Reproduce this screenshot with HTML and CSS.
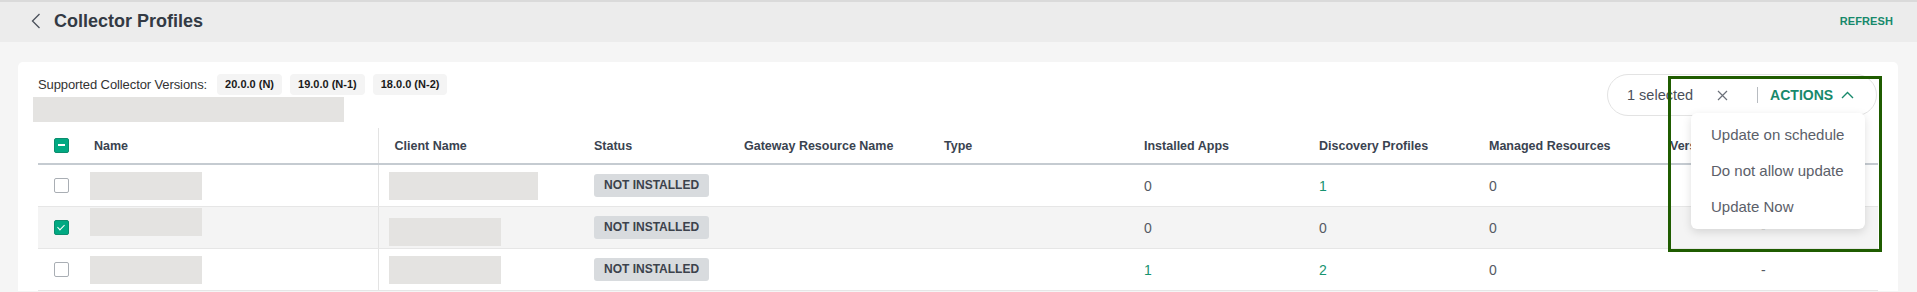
FILE: index.html
```html
<!DOCTYPE html>
<html lang="en">

<head>
    <meta charset="UTF-8">
    <meta name="viewport" content="width=device-width, initial-scale=1.0">
    <title>Collector Profiles</title>
    <link rel="stylesheet" href="styles.css">
</head>

<body>

    <header class="topbar">
        <div class="topbar-title">
            <svg class="back" width="10" height="16" viewBox="0 0 10 16">
                <path d="M8.5 1 L1.5 8 L8.5 15" fill="none" stroke="#4a505a" stroke-width="1.3" />
            </svg>
            <h1>Collector Profiles</h1>
        </div>
        <a class="refresh" href="#">REFRESH</a>
    </header>

    <main class="page">
        <section class="card">

            <div class="toolbar">
                <div class="toolbar-left">
                    <div class="versions">
                        <span class="versions-label">Supported Collector Versions:</span>
                        <span class="pill">20.0.0 (N)</span>
                        <span class="pill">19.0.0 (N-1)</span>
                        <span class="pill">18.0.0 (N-2)</span>
                    </div>
                    <div class="skeleton skeleton-wide"></div>
                </div>

                <div class="selection">
                    <span class="selection-count">1 selected</span>
                    <svg class="clear" width="11" height="11" viewBox="0 0 11 11">
                        <path d="M1 1 L10 10 M10 1 L1 10" stroke="#6b7079" stroke-width="1.2" />
                    </svg>
                    <span class="divider"></span>
                    <span class="actions">ACTIONS</span>
                    <svg class="caret" width="13" height="8" viewBox="0 0 13 8">
                        <path d="M1 7 L6.5 1.5 L12 7" fill="none" stroke="#17896b" stroke-width="1.4" />
                    </svg>

                    <ul class="menu">
                        <li>Update on schedule</li>
                        <li>Do not allow update</li>
                        <li>Update Now</li>
                    </ul>

                    <div class="highlight"></div>
                </div>
            </div>

            <table class="tabela">
                <colgroup>
                    <col style="width: 43px">
                    <col style="width: 297px">
                    <col style="width: 203px">
                    <col style="width: 150px">
                    <col style="width: 200px">
                    <col style="width: 200px">
                    <col style="width: 175px">
                    <col style="width: 170px">
                    <col style="width: 181px">
                    <col style="width: 221px">
                </colgroup>
                <thead>
                    <tr>
                        <th class="cb-cell"><span class="checkbox partial"></span></th>
                        <th class="col-name">Name</th>
                        <th class="col-client">Client Name</th>
                        <th>Status</th>
                        <th>Gateway Resource Name</th>
                        <th>Type</th>
                        <th>Installed Apps</th>
                        <th>Discovery Profiles</th>
                        <th>Managed Resources</th>
                        <th>Version</th>
                    </tr>
                </thead>
                <tbody>
                    <tr>
                        <td class="cb-cell"><span class="checkbox"></span></td>
                        <td class="col-name"><div class="skeleton skeleton-name"></div></td>
                        <td class="col-client"><div class="skeleton skeleton-client-long"></div></td>
                        <td><span class="badge">NOT INSTALLED</span></td>
                        <td></td>
                        <td></td>
                        <td>0</td>
                        <td class="link">1</td>
                        <td>0</td>
                        <td class="version">-</td>
                    </tr>
                    <tr class="selected">
                        <td class="cb-cell"><span class="checkbox checked"></span></td>
                        <td class="col-name"><div class="skeleton skeleton-name up"></div></td>
                        <td class="col-client"><div class="skeleton skeleton-client down"></div></td>
                        <td><span class="badge">NOT INSTALLED</span></td>
                        <td></td>
                        <td></td>
                        <td>0</td>
                        <td>0</td>
                        <td>0</td>
                        <td class="version">-</td>
                    </tr>
                    <tr>
                        <td class="cb-cell"><span class="checkbox"></span></td>
                        <td class="col-name"><div class="skeleton skeleton-name"></div></td>
                        <td class="col-client"><div class="skeleton skeleton-client"></div></td>
                        <td><span class="badge">NOT INSTALLED</span></td>
                        <td></td>
                        <td></td>
                        <td class="link">1</td>
                        <td class="link">2</td>
                        <td>0</td>
                        <td class="version">-</td>
                    </tr>
                </tbody>
            </table>

        </section>
    </main>

</body>

</html>
```

FILE: styles.css
```css
body {
    font-family: "Liberation Sans", Arial, sans-serif;
    margin: 0;
    padding: 0;
    background-color: #f5f5f5;
    color: #555a63;
}

.topbar {
    display: flex;
    align-items: center;
    justify-content: space-between;
    height: 42px;
    padding: 0 24px 0 31px;
    background-color: #ececec;
    box-shadow: inset 0 2px 0 #dadada;
}

.topbar-title {
    display: flex;
    align-items: center;
}

.back {
    margin-right: 13px;
}

.topbar h1 {
    margin: 0;
    font-size: 18px;
    font-weight: bold;
    color: #333a44;
}

.refresh {
    font-size: 11px;
    font-weight: bold;
    color: #17896b;
    text-decoration: none;
    letter-spacing: 0.1px;
}

.page {
    padding: 20px 19px 0 18px;
}

.card {
    background-color: #fff;
    border-radius: 5px 5px 0 0;
    padding: 12px 20px 0 15px;
}

.toolbar {
    display: flex;
    justify-content: space-between;
    align-items: flex-start;
}

.versions {
    display: flex;
    align-items: center;
    height: 21px;
    padding-left: 5px;
}

.versions-label {
    font-size: 13px;
    color: #333;
    letter-spacing: -0.1px;
    margin-right: 10px;
}

.pill {
    background-color: #f4f4f4;
    border-radius: 4px;
    padding: 0 8px;
    height: 21px;
    line-height: 21px;
    font-size: 11px;
    font-weight: bold;
    color: #1a1a1a;
    margin-right: 8px;
}

.skeleton {
    background-color: #e4e3e1;
}

.skeleton-wide {
    width: 311px;
    height: 25px;
    margin-top: 2px;
}

.selection {
    position: relative;
    display: flex;
    align-items: center;
    flex-shrink: 0;
    width: 270px;
    height: 42px;
    box-sizing: border-box;
    border: 1px solid #e3e3e3;
    border-radius: 21px;
    padding: 0 0 0 19px;
    margin-right: 1px;
    white-space: nowrap;
}

.selection > * {
    flex-shrink: 0;
}

.selection-count {
    font-size: 14.5px;
    color: #4a505a;
}

.clear {
    margin-left: 24px;
}

.divider {
    width: 1px;
    height: 16px;
    background-color: #b8bcc1;
    margin-left: 29px;
}

.actions {
    margin-left: 12px;
    font-size: 14px;
    font-weight: bold;
    color: #17896b;
}

.caret {
    margin-left: 8px;
}

.menu {
    position: absolute;
    top: 38px;
    left: 83px;
    width: 174px;
    margin: 0;
    padding: 4px 0;
    list-style: none;
    background-color: #fff;
    border-radius: 6px;
    box-shadow: 0 3px 10px rgba(0, 0, 0, 0.13);
    z-index: 2;
}

.menu li {
    height: 36px;
    line-height: 36px;
    padding-left: 20px;
    font-size: 15px;
    color: #5b6069;
}

.highlight {
    position: absolute;
    top: 1px;
    left: 60px;
    width: 214px;
    height: 176px;
    box-sizing: border-box;
    border: 3px solid #1f5c00;
    z-index: 3;
}

.tabela {
    table-layout: fixed;
    width: 1840px;
    margin: 6px 0 0 5px;
    border-collapse: collapse;
}

.tabela th {
    height: 35px;
    padding: 0 0 0 13px;
    text-align: left;
    font-size: 12.5px;
    font-weight: bold;
    color: #3a4350;
    border-bottom: 2px solid #c5cbd1;
}

.tabela td {
    height: 41px;
    padding: 0 0 0 13px;
    font-size: 14px;
    color: #555a63;
    border-bottom: 1px solid #e6e6e6;
}

.tabela .cb-cell {
    padding-left: 16px;
}

.tabela .col-name {
    padding-left: 9px;
    border-right: 1px solid #e3e3e3;
}

.tabela th.col-name {
    padding-left: 13px;
}

.tabela .col-client {
    padding-left: 10px;
}

.tabela th.col-client {
    padding-left: 16px;
}

.tabela .selected td {
    background-color: #f4f4f4;
}

.tabela .link {
    color: #17936f;
}

.tabela .version {
    padding-left: 104px;
}

.checkbox {
    display: block;
    width: 15px;
    height: 15px;
    box-sizing: border-box;
    border: 1px solid #a9aeb4;
    border-radius: 2px;
    background-color: #fff;
    position: relative;
}

.checkbox.partial,
.checkbox.checked {
    background-color: #01a982;
    border-color: #0c8d6e;
}

.checkbox.partial::after {
    content: "";
    position: absolute;
    left: 3px;
    top: 5px;
    width: 7px;
    height: 2px;
    background-color: #fff;
}

.checkbox.checked::after {
    content: "";
    position: absolute;
    left: 4px;
    top: 2px;
    width: 3px;
    height: 6px;
    border: solid #fff;
    border-width: 0 1.5px 1.5px 0;
    transform: rotate(45deg);
}

.skeleton-name {
    width: 112px;
    height: 28px;
}

.skeleton-client {
    width: 112px;
    height: 28px;
}

.skeleton-client-long {
    width: 149px;
    height: 28px;
}

.up {
    margin-top: -12px;
}

.down {
    margin-top: 8px;
}

.badge {
    display: inline-block;
    height: 23px;
    line-height: 23px;
    padding: 0 10px;
    border-radius: 3px;
    background-color: #d8dbde;
    font-size: 12px;
    font-weight: bold;
    color: #3c424c;
}
```
